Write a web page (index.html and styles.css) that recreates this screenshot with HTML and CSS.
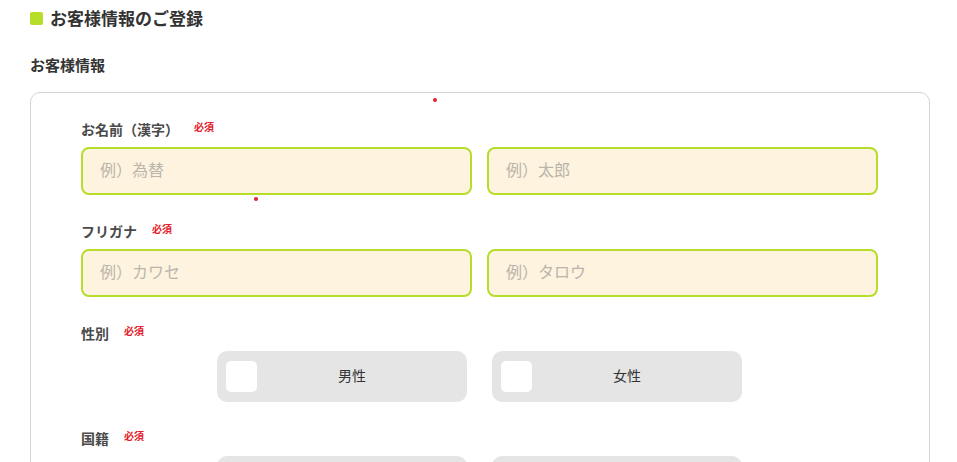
FILE: index.html
```html
<!DOCTYPE html>
<html lang="ja">
<head>
<meta charset="utf-8">
<title>お客様情報のご登録</title>
<link rel="stylesheet" href="styles.css">
</head>
<body>
<div class="page">
  <h1 class="title"><span class="title-mark"></span>お客様情報のご登録</h1>
  <h2 class="subtitle">お客様情報</h2>
  <div class="card">
    <span class="dot dot-a"></span>
    <span class="dot dot-b"></span>
    <div class="field">
      <div class="label-row"><span class="label">お名前（漢字）</span><span class="req">必須</span></div>
      <div class="inputs">
        <input class="text-input" type="text" placeholder="例）為替">
        <input class="text-input" type="text" placeholder="例）太郎">
      </div>
    </div>
    <div class="field">
      <div class="label-row"><span class="label">フリガナ</span><span class="req">必須</span></div>
      <div class="inputs">
        <input class="text-input" type="text" placeholder="例）カワセ">
        <input class="text-input" type="text" placeholder="例）タロウ">
      </div>
    </div>
    <div class="field">
      <div class="label-row"><span class="label">性別</span><span class="req">必須</span></div>
      <div class="radios">
        <label class="radio"><span class="radio-box"></span><span class="radio-text">男性</span></label>
        <label class="radio"><span class="radio-box"></span><span class="radio-text">女性</span></label>
      </div>
    </div>
    <div class="field">
      <div class="label-row"><span class="label">国籍</span><span class="req">必須</span></div>
      <div class="radios">
        <label class="radio"><span class="radio-box"></span></label>
        <label class="radio"><span class="radio-box"></span></label>
      </div>
    </div>
  </div>
</div>
</body>
</html>
```
FILE: styles.css
```css
* { box-sizing: border-box; }
html, body { margin: 0; padding: 0; background: #fff; }
body {
  font-family: "Noto Sans CJK JP", "Noto Sans", sans-serif;
  color: #333;
  overflow: hidden;
  height: 462px;
}
.page {
  padding: 6px 27px 0 30px;
}
.title {
  margin: 0;
  display: flex;
  align-items: center;
  font-size: 17px;
  line-height: 24px;
  font-weight: bold;
  color: #333;
}
.title-mark {
  width: 13px;
  height: 13px;
  border-radius: 2px;
  background: #b5dd2a;
  margin-right: 7px;
}
.subtitle {
  margin: 24px 0 16px;
  font-size: 15px;
  line-height: 22px;
  font-weight: bold;
  color: #333;
}
.card {
  position: relative;
  width: 900px;
  border: 1px solid #d4d4d4;
  border-radius: 10px;
  padding: 26px 51px 40px 50px;
  display: flex;
  flex-direction: column;
  gap: 26px;
}
.dot {
  position: absolute;
  width: 4px;
  height: 4px;
  border-radius: 50%;
  background: #e3202a;
}
.dot-a { left: 402px; top: 5px; }
.dot-b { left: 223px; top: 104px; }
.field {
  display: flex;
  flex-direction: column;
  gap: 8px;
}
.label-row {
  display: flex;
  align-items: flex-start;
  height: 20px;
}
.label {
  font-size: 14px;
  line-height: 20px;
  font-weight: bold;
  color: #4a4a4a;
}
.req {
  margin-left: 15px;
  font-size: 10px;
  line-height: 16px;
  font-weight: bold;
  color: #e3202a;
}
.inputs {
  display: flex;
  gap: 15px;
}
.text-input {
  flex: 1;
  min-width: 0;
  height: 48px;
  border: 2px solid #b5dd2a;
  border-radius: 8px;
  background: #fdf3de;
  padding: 0 17px 4px;
  font-family: "Noto Sans CJK JP", "Noto Sans", sans-serif;
  font-size: 16px;
  color: #333;
  outline: none;
}
.text-input::placeholder { color: #bab5ac; }
.radios {
  display: flex;
  justify-content: center;
  gap: 25px;
}
.radio {
  position: relative;
  display: flex;
  align-items: center;
  width: 250px;
  height: 51px;
  border-radius: 10px;
  background: #e5e5e5;
  padding-left: 9px;
}
.radio-box {
  width: 31px;
  height: 31px;
  border-radius: 5px;
  background: #fff;
  flex: none;
}
.radio-text {
  flex: 1;
  text-align: center;
  padding: 0 20px 4px 0;
  font-size: 14px;
  color: #333;
}
```
